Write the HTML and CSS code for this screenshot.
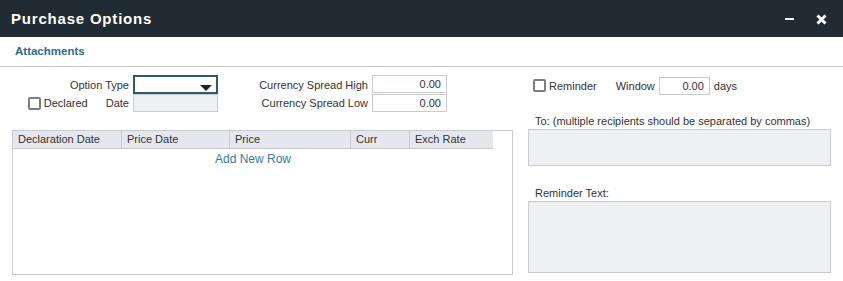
FILE: index.html
```html
<!DOCTYPE html>
<html lang="en">
<head>
    <meta charset="UTF-8">
    <title>Purchase Options</title>
    <link rel="stylesheet" href="styles.css">
</head>
<body>
    <div class="dialog">
        <div class="titlebar">
            <h1 class="title">Purchase Options</h1>
            <div class="window-buttons">
                <span class="btn-min"></span>
                <svg class="btn-close" width="11" height="11" viewBox="0 0 11 11">
                    <path d="M1.5 1.5 L9.5 9.5 M9.5 1.5 L1.5 9.5" stroke="#fff" stroke-width="3"/>
                </svg>
            </div>
        </div>
        <div class="tabs">
            <span class="tab">Attachments</span>
        </div>
        <div class="content">
            <div class="left">
                <div class="form">
                    <label class="lbl">Option Type</label>
                    <div class="select"><span class="caret"></span></div>
                    <label class="lbl">Currency Spread High</label>
                    <div class="input num">0.00</div>

                    <div class="lbl declared">
                        <span class="check-wrap"><span class="check"></span>Declared</span>
                        <span class="date-lbl">Date</span>
                    </div>
                    <div class="input readonly"></div>
                    <label class="lbl">Currency Spread Low</label>
                    <div class="input num">0.00</div>
                </div>
                <div class="grid">
                    <div class="grid-head">
                        <div class="col" style="width: 109px">Declaration Date</div>
                        <div class="col" style="width: 108px">Price Date</div>
                        <div class="col" style="width: 121px">Price</div>
                        <div class="col" style="width: 59px">Curr</div>
                        <div class="col" style="width: 83px">Exch Rate</div>
                    </div>
                    <div class="add-row">Add New Row</div>
                </div>
            </div>
            <div class="right">
                <div class="reminder-row">
                    <span class="check-wrap"><span class="check"></span>Reminder</span>
                    <span class="window-lbl">Window</span>
                    <div class="input num small">0.00</div>
                    <span>days</span>
                </div>
                <p class="field-lbl to-lbl">To: (multiple recipients should be separated by commas)</p>
                <div class="textarea to-box"></div>
                <p class="field-lbl text-lbl">Reminder Text:</p>
                <div class="textarea text-box"></div>
            </div>
        </div>
    </div>
</body>
</html>
```

FILE: styles.css
```css
* {
    margin: 0;
    padding: 0;
    box-sizing: border-box;
}
body {
    font-family: "Liberation Sans", Arial, sans-serif;
    font-size: 11px;
    color: #333;
    background: #fff;
}
.titlebar {
    height: 37px;
    background: #212b33;
    display: flex;
    align-items: center;
    justify-content: space-between;
    padding: 0 16px 0 11px;
}
.title {
    color: #fff;
    font-size: 15px;
    font-weight: bold;
    letter-spacing: 0.8px;
}
.window-buttons {
    display: flex;
    align-items: center;
    gap: 22px;
}
.btn-min {
    display: block;
    width: 9px;
    height: 2px;
    background: #fff;
    margin-top: 1px;
}
.btn-close {
    display: block;
    margin-top: 1px;
}
.tabs {
    height: 30px;
    border-bottom: 1px solid #c8ccd2;
    padding: 8px 0 0 15px;
}
.tab {
    color: #2e6b8e;
    font-weight: bold;
    font-size: 11.5px;
}
.content {
    display: flex;
    gap: 15px;
    padding: 8px 12px 0 12px;
}
.left {
    width: 501px;
}
.form {
    display: grid;
    grid-template-columns: 121px 85px 154px 75px;
    grid-template-rows: 19px 18px;
    align-items: center;
}
.lbl {
    text-align: right;
    white-space: nowrap;
    padding-right: 4px;
}
.declared {
    display: flex;
    justify-content: flex-end;
    align-items: center;
}
.date-lbl {
    margin-left: 18px;
}
.check-wrap {
    display: inline-flex;
    align-items: center;
    gap: 3px;
}
.check {
    display: inline-block;
    width: 13px;
    height: 13px;
    border: 2px solid #7c7c86;
    border-radius: 2px;
    background: #fff;
}
.select {
    height: 19px;
    border: 2px solid #2c5a6e;
    position: relative;
}
.caret {
    position: absolute;
    right: 4px;
    top: 8px;
    width: 0;
    height: 0;
    border-left: 6px solid transparent;
    border-right: 6px solid transparent;
    border-top: 6px solid #222;
}
.input {
    height: 18px;
    border: 1px solid #c8ccd2;
    background: #fff;
    line-height: 16px;
    padding: 0 5px;
}
.form .input {
    align-self: start;
}
.input.num {
    text-align: right;
}
.input.readonly {
    background: #eff0f2;
}
.grid {
    margin-top: 18px;
    height: 145px;
    border: 1px solid #c8ccd2;
}
.grid-head {
    display: flex;
    width: 480px;
    height: 18px;
    background: #e6e7ee;
    border-bottom: 1px solid #c8ccd2;
}
.col {
    padding-left: 5px;
    line-height: 17px;
    border-right: 1px solid #c8ccd2;
    white-space: nowrap;
}
.col:last-child {
    border-right: none;
}
.add-row {
    width: 480px;
    text-align: center;
    color: #3a7aa0;
    font-size: 12px;
    margin-top: 3px;
}
.right {
    width: 303px;
}
.reminder-row {
    display: flex;
    align-items: center;
    height: 19px;
    padding-left: 5px;
    margin-top: 1px;
}
.window-lbl {
    margin-left: 19px;
    margin-right: 4px;
}
.input.small {
    width: 51px;
    margin-right: 4px;
}
.field-lbl {
    padding-left: 7px;
    line-height: 14px;
}
.to-lbl {
    margin-top: 19px;
    margin-bottom: 1px;
}
.text-lbl {
    margin-top: 20px;
    margin-bottom: 1px;
}
.textarea {
    border: 1px solid #c8ccd2;
    background: #eff0f2;
}
.to-box {
    height: 37px;
}
.text-box {
    height: 72px;
}
```
